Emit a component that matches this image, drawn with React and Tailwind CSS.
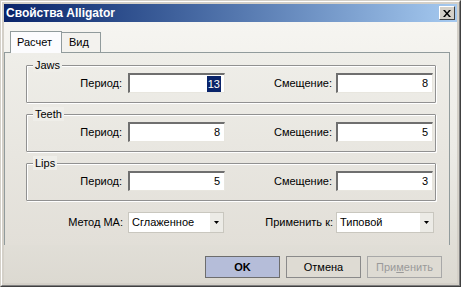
import React from "react";

const font = { fontFamily: '"Liberation Sans", Arial, sans-serif' };

function Field({ value, selected }) {
  return (
    <div className="w-[97px] h-[20px] bg-white border-t-2 border-l-2 border-t-[#6f6f6f] border-l-[#6f6f6f] border-b border-r border-b-[#e8e6df] border-r-[#e8e6df] flex items-center justify-end pr-[3px] text-[11px] text-black">
      {selected ? (
        <span className="bg-[#0a246a] text-white px-[1px] leading-[16px]">{value}</span>
      ) : (
        <span className="leading-[15px] pr-[1px]">{value}</span>
      )}
    </div>
  );
}

function Group({ title, period, shift, selected }) {
  return (
    <div className="relative ml-[21px] mr-[13px] h-[38px] border border-[#919191] shadow-[1px_1px_0_#ffffff,inset_1px_1px_0_#ffffff] rounded-[1px]">
      <div className="absolute left-[6px] top-[-8px] px-[2px] bg-[#efeee9] text-[11px] leading-[14px] text-black">{title}</div>
      <div className="flex items-center mt-[7px]">
        <div className="w-[96px] text-right text-[11px] text-black pr-[1px]">Период:</div>
        <div className="ml-[5px]"><Field value={period} selected={selected} /></div>
        <div className="w-[108px] text-right text-[11px] text-black pr-[1px]">Смещение:</div>
        <div className="ml-[3px]"><Field value={shift} /></div>
      </div>
    </div>
  );
}

function Select({ value, width }) {
  return (
    <div className={`h-[21px] bg-white border border-[#c9c7bf] flex items-center text-[11px] text-black ${width}`}>
      <span className="flex-1 pl-[3px]">{value}</span>
      <div className="w-[13px] h-[19px] bg-[#ecebe6] flex items-center justify-center">
        <svg width="5" height="3" viewBox="0 0 5 3"><path d="M0 0h5L2.5 3z" fill="#000" /></svg>
      </div>
    </div>
  );
}

export default function App() {
  return (
    <div className="w-[461px] h-[287px] bg-[#d4d0c8] border-t border-l border-t-[#d4d0c8] border-l-[#d4d0c8] border-b border-r border-b-[#404040] border-r-[#404040]" style={font}>
      <div className="w-full h-full border-t border-l border-t-white border-l-white border-b border-r border-b-[#808080] border-r-[#808080] p-[2px] flex flex-col">
        <div className="h-[18px] bg-gradient-to-r from-[#0a246a] to-[#a6caf0] flex items-center justify-between pl-[2px] pr-[2px]">
          <span className="text-white font-bold text-[12px] leading-none">Свойства Alligator</span>
          <div className="w-[16px] h-[14px] bg-[#d4d0c8] border-t border-l border-t-white border-l-white border-b border-r border-b-[#404040] border-r-[#404040] flex items-center justify-center">
            <svg width="8" height="7" viewBox="0 0 8 7"><path d="M0 0h2l2 2.5L6 0h2L5 3.5 8 7H6L4 4.5 2 7H0l3-3.5z" fill="#000" /></svg>
          </div>
        </div>
        <div className="flex-1 flex flex-col bg-gradient-to-b from-[#f6f5f1] via-[#ecebe6] to-[#dcd9d1]">
          <div className="flex items-end pl-[6px] h-[30px]">
            <div className="w-[52px] h-[22px] bg-[#fcfcfe] border border-b-0 border-[#919b9c] flex items-center pl-[6px] text-[11px] text-black relative top-[1px]">Расчет</div>
            <div className="w-[39px] h-[20px] bg-[#f3f2ee] border border-l-0 border-b-0 border-[#919b9c] flex items-center pl-[7px] text-[11px] text-black">Вид</div>
          </div>
          <div className="mr-[7px] border-t border-l border-r border-[#919b9c] bg-gradient-to-b from-[#efeee9] to-[#e2dfd8] pt-[12px] pb-[12px] flex flex-col gap-[11px]">
            <Group title="Jaws" period="13" shift="8" selected />
            <Group title="Teeth" period="8" shift="5" />
            <Group title="Lips" period="5" shift="3" />
            <div className="flex items-center">
              <div className="w-[118px] text-right text-[11px] text-black">Метод МА:</div>
              <div className="ml-[5px]"><Select value="Сглаженное" width="w-[96px]" /></div>
              <div className="w-[109px] text-right text-[11px] text-black">Применить к:</div>
              <div className="ml-[3px]"><Select value="Типовой" width="w-[98px]" /></div>
            </div>
          </div>
          <div className="flex justify-end gap-[6px] pr-[15px] pt-[11px]">
            <div className="w-[75px] h-[22px] bg-[#b5bdd9] border border-[#6d6d6d] flex items-center justify-center text-[11px] font-bold text-black">OK</div>
            <div className="w-[75px] h-[22px] bg-[#dedbd3] border border-[#8a8a8a] flex items-center justify-center text-[11px] text-black">Отмена</div>
            <div className="w-[75px] h-[22px] bg-[#dedbd3] border border-[#a8a8a8] flex items-center justify-center text-[11px] text-[#9a9a9a]">При<span className="underline">м</span>енить</div>
          </div>
        </div>
      </div>
    </div>
  );
}
